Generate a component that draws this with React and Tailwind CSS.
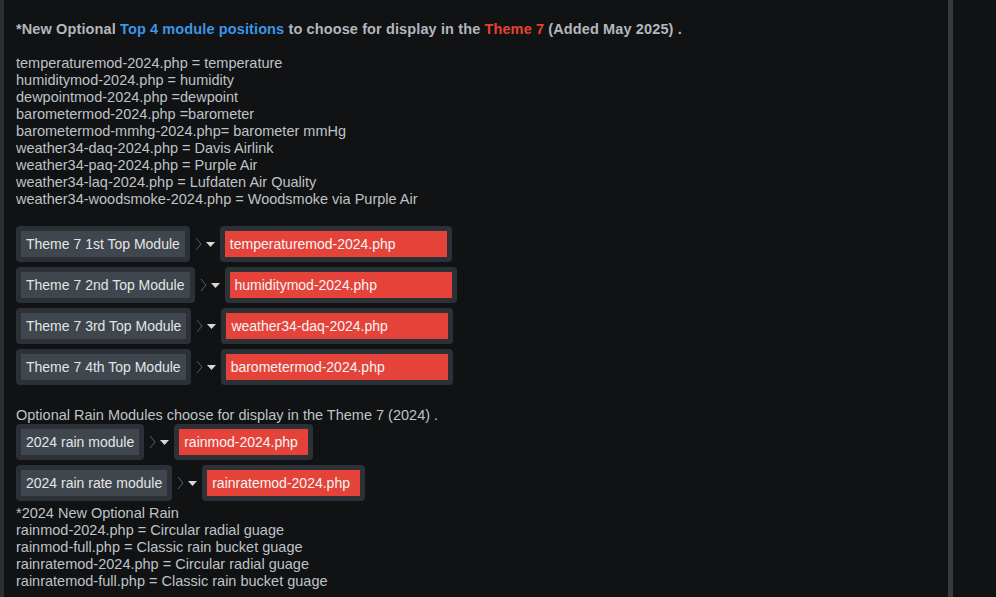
const TOP_MODULES = [
  { label: 'Theme 7 1st Top Module', value: 'temperaturemod-2024.php' },
  { label: 'Theme 7 2nd Top Module', value: 'humiditymod-2024.php' },
  { label: 'Theme 7 3rd Top Module', value: 'weather34-daq-2024.php' },
  { label: 'Theme 7 4th Top Module', value: 'barometermod-2024.php' },
]

const RAIN_MODULES = [
  { label: '2024 rain module', value: 'rainmod-2024.php' },
  { label: '2024 rain rate module', value: 'rainratemod-2024.php' },
]

const LEGEND = [
  'temperaturemod-2024.php = temperature',
  'humiditymod-2024.php = humidity',
  'dewpointmod-2024.php =dewpoint',
  'barometermod-2024.php =barometer',
  'barometermod-mmhg-2024.php= barometer mmHg',
  'weather34-daq-2024.php = Davis Airlink',
  'weather34-paq-2024.php = Purple Air',
  'weather34-laq-2024.php = Lufdaten Air Quality',
  'weather34-woodsmoke-2024.php = Woodsmoke via Purple Air',
]

const RAIN_LEGEND = [
  '*2024 New Optional Rain',
  'rainmod-2024.php = Circular radial guage',
  'rainmod-full.php = Classic rain bucket guage',
  'rainratemod-2024.php = Circular radial guage',
  'rainratemod-full.php = Classic rain bucket guage',
]

function Arrow() {
  return (
    <div className="flex items-center gap-[4px] px-[5px]">
      <svg width="7" height="14" viewBox="0 0 7 14" className="text-[#5a5f66]">
        <path d="M1 1 L6 7 L1 13" fill="none" stroke="currentColor" strokeWidth="1" />
      </svg>
      <svg width="9" height="5" viewBox="0 0 9 5" className="text-[#d8d8d8]">
        <path d="M0 0 H9 L4.5 5 Z" fill="currentColor" />
      </svg>
    </div>
  )
}

function ModuleRow({ label, value, wide }) {
  return (
    <div className="flex items-center text-[14px]">
      <div className="bg-[#2c3137] rounded-[4px] p-[5px]">
        <div className="bg-[#40464d] h-[26px] px-[5px] flex items-center text-[#e4e5e6] whitespace-nowrap">{label}</div>
      </div>
      <Arrow />
      <div className="bg-[#2c3137] rounded-[4px] p-[5px]">
        <div
          className={`bg-[#e5433a] h-[26px] pl-[5px] flex items-center text-[#f5f5f5] whitespace-nowrap ${
            wide ? 'w-[222px] pr-[5px]' : 'pr-[10px]'
          }`}
        >
          {value}
        </div>
      </div>
    </div>
  )
}

export default function App() {
  return (
    <div
      className="w-[996px] h-[597px] overflow-hidden bg-[#111214] flex text-[14.5px] leading-[17px] text-[#bfc2c6]"
      style={{ fontFamily: '"Liberation Sans", Arial, sans-serif' }}
    >
      <div className="w-[4px] bg-[#2a2f34] flex-shrink-0" />
      <div className="w-[944px] flex-shrink-0 pl-[12px] pt-[21px]">
        <p className="font-bold text-[#b3b7bc] tracking-[0.12px]">
          *New Optional <span className="text-[#3d95e6]">Top 4 module positions</span> to choose for display in the{' '}
          <span className="text-[#e5432f]">Theme 7</span> (Added May 2025) .
        </p>

        <div className="mt-[17px]">
          {LEGEND.map((l) => (
            <div key={l}>{l}</div>
          ))}
        </div>

        <div className="mt-[18px] flex flex-col gap-[5px]">
          {TOP_MODULES.map((m) => (
            <ModuleRow key={m.label} label={m.label} value={m.value} wide />
          ))}
        </div>

        <div className="mt-[22px]">Optional Rain Modules choose for display in the Theme 7 (2024) .</div>

        <div className="flex flex-col gap-[5px]">
          {RAIN_MODULES.map((m) => (
            <ModuleRow key={m.label} label={m.label} value={m.value} />
          ))}
        </div>

        <div className="mt-[4px]">
          {RAIN_LEGEND.map((l) => (
            <div key={l}>{l}</div>
          ))}
        </div>
      </div>
      <div className="w-[5px] bg-[#343a40] flex-shrink-0" />
    </div>
  )
}
